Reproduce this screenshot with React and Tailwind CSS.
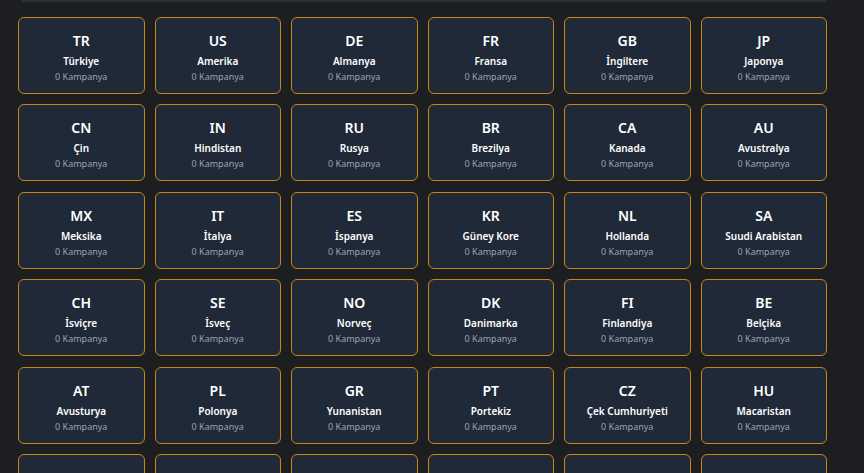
const countries = [
  ["TR", "Türkiye"],
  ["US", "Amerika"],
  ["DE", "Almanya"],
  ["FR", "Fransa"],
  ["GB", "İngiltere"],
  ["JP", "Japonya"],
  ["CN", "Çin"],
  ["IN", "Hindistan"],
  ["RU", "Rusya"],
  ["BR", "Brezilya"],
  ["CA", "Kanada"],
  ["AU", "Avustralya"],
  ["MX", "Meksika"],
  ["IT", "İtalya"],
  ["ES", "İspanya"],
  ["KR", "Güney Kore"],
  ["NL", "Hollanda"],
  ["SA", "Suudi Arabistan"],
  ["CH", "İsviçre"],
  ["SE", "İsveç"],
  ["NO", "Norveç"],
  ["DK", "Danimarka"],
  ["FI", "Finlandiya"],
  ["BE", "Belçika"],
  ["AT", "Avusturya"],
  ["PL", "Polonya"],
  ["GR", "Yunanistan"],
  ["PT", "Portekiz"],
  ["CZ", "Çek Cumhuriyeti"],
  ["HU", "Macaristan"],
  ["RO", "Romanya"],
  ["IE", "İrlanda"],
  ["UA", "Ukrayna"],
  ["NZ", "Yeni Zelanda"],
  ["ZA", "Güney Afrika"],
  ["AR", "Arjantin"],
];

function CountryCard({ code, name }) {
  return (
    <div className="h-[77px] rounded-md border border-[#c9870f] bg-[#1f2937] flex flex-col items-center pt-[13px]">
      <span className="text-[14px] leading-[20px] font-semibold text-white">{code}</span>
      <span className="mt-[3px] text-[10px] leading-[14px] font-semibold text-white">{name}</span>
      <span className="mt-[3px] text-[9px] leading-[12px] text-[#9ca3af]">0 Kampanya</span>
    </div>
  );
}

export default function App() {
  return (
    <div
      className="w-[864px] h-[473px] overflow-hidden bg-[#1c1e22]"
      style={{ fontFamily: '"Noto Sans", "Open Sans", sans-serif' }}
    >
      {/* bottom edge of the panel above */}
      <div className="mx-[21px] w-[805px] h-[2px] bg-[#2c3038]" />

      <div className="pl-[18px] pt-[15px]">
        <div className="w-[809px] grid grid-cols-6 gap-x-[10px] gap-y-[10.4px]">
          {countries.map(([code, name]) => (
            <CountryCard key={code} code={code} name={name} />
          ))}
        </div>
      </div>
    </div>
  );
}
